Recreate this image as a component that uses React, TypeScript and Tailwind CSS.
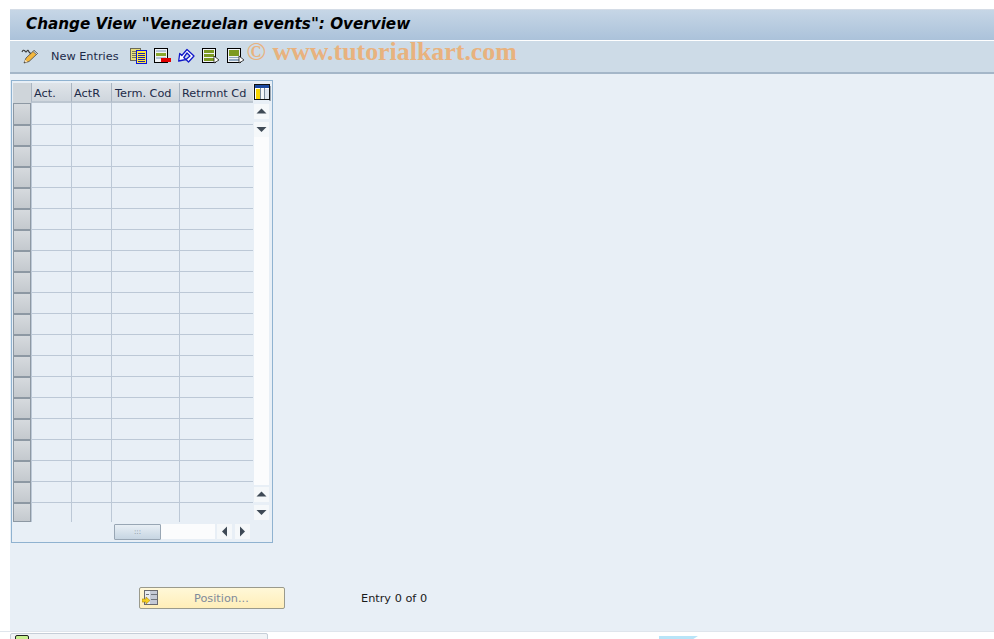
const cols = [
  { label: "Act.", w: "w-[40px]", pad: "pl-[2px]" },
  { label: "ActR", w: "w-[40px]", pad: "pl-[2px]" },
  { label: "Term. Cod", w: "w-[68px]", pad: "pl-[3px]" },
  { label: "Retrmnt Cd", w: "w-[74px]", pad: "pl-[2px]" },
];
const rowHeights = Array.from({ length: 20 }, (_, i) => (i === 0 ? "h-[22px]" : i === 19 ? "h-[19px]" : "h-[21px]"));
const font = { fontFamily: '"DejaVu Sans", sans-serif' };

function Tri({ d }: { d: "up" | "down" | "left" | "right" }) {
  const p = { up: "1.5,8.5 11.5,8.5 6.5,3.5", down: "1.5,4 11.5,4 6.5,9", left: "9,1.5 9,11.5 4,6.5", right: "4,1.5 4,11.5 9,6.5" }[d];
  return (
    <svg width="13" height="13" viewBox="0 0 13 13"><polygon points={p} fill="#3f4a56" /></svg>
  );
}
function ScrollBtn({ d }: { d: "up" | "down" | "left" | "right" }) {
  return <div className="w-[15px] h-[15px] bg-[#f5f8fa] flex items-center justify-center"><Tri d={d} /></div>;
}
function Copy() {
  return (
    <svg width="17" height="16" viewBox="0 0 17 16" shapeRendering="crispEdges">
      <rect x="0.5" y="0.5" width="10" height="12" fill="#e9de7a" stroke="#6a6a5a" />
      <path d="M2 3h7M2 5h7M2 7h7M2 9h7" stroke="#77775a" />
      <rect x="6.5" y="2.5" width="10" height="13" fill="#ffe83c" stroke="#0a14d8" />
      <path d="M8 5h7M8 7h7M8 9h7M8 11h7M8 13h7" stroke="#1a20b0" />
    </svg>
  );
}
function Sheet({ variant }: { variant: "del" | "a" | "b" }) {
  return (
    <svg width="18" height="16" viewBox="0 0 18 16" shapeRendering="crispEdges">
      <rect x="0.5" y="0.5" width="13" height="14" fill="#f0f3f6" stroke="#000" />
      {variant === "del" && (
        <>
          <rect x="2" y="2" width="10" height="2" fill="#b6c4d8" />
          <rect x="2" y="5" width="10" height="3" fill="#8aa82e" />
          <rect x="2" y="9" width="10" height="2" fill="#b6c4d8" />
          <rect x="7" y="10" width="10" height="4" fill="#e00000" />
        </>
      )}
      {variant === "a" && (
        <>
          <rect x="2" y="2" width="10" height="3" fill="#7c9a22" />
          <rect x="2" y="6" width="10" height="3" fill="#7c9a22" />
          <rect x="2" y="10" width="10" height="3" fill="#7c9a22" />
        </>
      )}
      {variant === "b" && (
        <>
          <rect x="2" y="2" width="10" height="6" fill="#7c9a22" />
          <rect x="2" y="9" width="10" height="1" fill="#8fa8c0" />
          <rect x="2" y="11" width="10" height="2" fill="#8fa8c0" />
        </>
      )}
      {variant !== "del" && <polygon points="12,8 12,15 17,12" fill="#fff" stroke="#222" strokeWidth="0.8" shapeRendering="auto" />}
    </svg>
  );
}
function Undo() {
  return (
    <svg width="17" height="16" viewBox="0 0 17 16">
      <path d="M0.7 13 L1.7 5.5 L3.8 7.5 L9 1.5 L16 8 L10.5 14 L8 11.5 L12 8 L9 5 L5.8 9.5 L7.8 11.5 Z" fill="#fff" stroke="#1018c8" strokeWidth="1.3" strokeLinejoin="round" />
    </svg>
  );
}
function Pencil() {
  return (
    <svg width="18" height="17" viewBox="0 0 18 17">
      <path d="M1 4 Q2 1 4 3 Q5 5 6 3 Q7 1 8 4 L10 6" fill="none" stroke="#333" strokeWidth="1.1" />
      <path d="M3 15 L5 10 L13 2.5 L16.5 5.5 L8 13.5 Z" fill="#f4b83e" stroke="#444" strokeWidth="0.8" />
      <path d="M12 3.5 L13 2.5 L16.5 5.5 L15.5 6.5 Z" fill="#d8e4f0" stroke="#444" strokeWidth="0.6" />
      <path d="M3 15 L4 11.5 L6.5 14 Z" fill="#f6e2c0" />
      <path d="M3 15 L3.5 13.5 L4.8 14.5 Z" fill="#222" />
    </svg>
  );
}

export default function App() {
  return (
    <div className="w-[994px] h-[639px] bg-white overflow-hidden flex flex-col pt-[9px]" style={font}>
      <div className="ml-[10px] flex-1 flex flex-col border-t border-[#d4dce6] min-h-0">
        <div className="h-[31px] bg-gradient-to-b from-[#c6d6e6] to-[#abc2da] flex items-center pl-[16px] border-b border-white">
          <span className="text-[15.2px] font-bold italic text-black leading-none whitespace-nowrap">Change View "Venezuelan events": Overview</span>
        </div>
        <div className="h-[33px] bg-[#cddbe7] border-b-2 border-[#a4b6c8] flex items-center pl-[11px]">
          <Pencil />
          <span className="ml-[12px] pt-[2px] text-[11.3px] text-[#1c2a48] whitespace-nowrap">New Entries</span>
          <div className="ml-[11px] mb-[2px] flex items-center">
            <Copy />
            <div className="ml-[7px] flex"><Sheet variant="del" /></div>
            <div className="ml-[6px] flex"><Undo /></div>
            <div className="ml-[7px] flex"><Sheet variant="a" /></div>
            <div className="ml-[7px] flex"><Sheet variant="b" /></div>
          </div>
          <span className="ml-[2px] mt-[-10px] text-[25.9px] font-bold text-[#e8b27e] whitespace-nowrap leading-none" style={{ fontFamily: '"Liberation Serif", serif' }}>© www.tutorialkart.com</span>
        </div>
        <div className="flex-1 bg-[#e8eff6] flex flex-col pt-[6px] pl-px min-h-0">
          <div className="w-[262px] h-[463px] border border-[#8fb2d0] pt-[2px] pl-px">
            <div className="flex h-[20px]">
              <div className="w-[18px] bg-[#cfd5da]" />
              {cols.map((c) => (
                <div key={c.label} className={`${c.w} ${c.pad} border-l border-[#a9b5c2] border-b-2 border-b-[#bcc6d0] bg-gradient-to-b from-[#dfe4e9] to-[#cfd6dd] text-[11.3px] leading-[22px] text-[#1c2a48] whitespace-nowrap overflow-hidden`}>{c.label}</div>
              ))}
              <div className="w-[18px] pl-px pt-px">
                <svg width="17" height="17" viewBox="0 0 17 17" shapeRendering="crispEdges">
                  <rect x="15" y="2" width="2" height="15" fill="#9aa6b2" />
                  <rect x="0.5" y="0.5" width="15" height="15" fill="#fff" stroke="#111" />
                  <rect x="1" y="1" width="14" height="3" fill="#1c4aa0" />
                  <rect x="2" y="5" width="4" height="10" fill="#f6d400" />
                  <rect x="7" y="5" width="3" height="10" fill="#f4f6f8" />
                  <rect x="11" y="5" width="4" height="10" fill="#dfe6ee" />
                  <path d="M6.5 4v11M10.5 4v11" stroke="#7a8a9a" />
                </svg>
              </div>
            </div>
            <div className="flex h-[419px]">
              <div className="flex flex-col w-[18px]">
                {rowHeights.map((h, r) => (
                  <div key={r} className={`${h} bg-gradient-to-b from-[#d6dade] to-[#c4c9ce] border border-[#8d98a3]`} />
                ))}
              </div>
              <div className="w-[222px] flex flex-col">
                {rowHeights.map((h, r) => (
                  <div key={r} className={`flex ${h} ${r < 19 ? "border-b border-[#bcc8d6]" : ""}`}>
                    {cols.map((c) => (
                      <div key={c.label} className={`${c.w} border-l border-[#bcc8d6]`} />
                    ))}
                  </div>
                ))}
              </div>
              <div className="w-[18px] pl-px pt-[1px] pb-[2px] flex flex-col">
                <div className="w-[15px] flex-1 flex flex-col">
                  <ScrollBtn d="up" />
                  <div className="h-[3px]" />
                  <ScrollBtn d="down" />
                  <div className="flex-1 bg-[#fbfcfd]" />
                  <div className="h-[2px]" />
                  <ScrollBtn d="up" />
                  <div className="h-[3px]" />
                  <ScrollBtn d="down" />
                </div>
              </div>
            </div>
            <div className="flex items-start h-[20px] pl-[101px] pt-[2px]">
              <div className="w-[47px] h-[16px] rounded-[1px] bg-gradient-to-b from-[#e8eff5] to-[#c6d5e2] border border-[#98a6b4] flex items-center justify-center text-[7px] text-[#6f7b87] leading-none">:::</div>
              <div className="w-[54px] h-[15px] bg-[#fbfcfd]" />
              <div className="ml-[2px]"><ScrollBtn d="left" /></div>
              <div className="ml-[3px]"><ScrollBtn d="right" /></div>
            </div>
          </div>
          <div className="flex items-center mt-[44px]">
            <div className="ml-[128px] w-[146px] h-[22px] rounded-[2px] border border-[#9a9a8c] bg-gradient-to-b from-[#fff8d8] to-[#ffeeb8] flex items-center relative">
              <svg width="16" height="16" viewBox="0 0 16 16" className="ml-[2px]" shapeRendering="crispEdges">
                <rect x="2.5" y="0.5" width="13" height="14" fill="#c4c9d6" stroke="#6a6a70" />
                <rect x="3" y="1" width="5" height="13" fill="#e8ecf2" />
                <path d="M4 4h3M9 4h6M9 9h6" stroke="#70747c" />
                <polygon points="0,9 4,9 4,7 8,10.5 4,14 4,12 0,12" fill="#f6d020" stroke="#a88410" strokeWidth="0.6" shapeRendering="auto" />
              </svg>
              <span className="absolute left-[54px] top-[3px] text-[11.3px] text-[#7f8a9a] whitespace-nowrap">Position...</span>
            </div>
            <span className="ml-[76px] pt-[3px] text-[11.3px] text-[#1a1a1a] whitespace-nowrap">Entry 0 of 0</span>
          </div>
        </div>
      </div>
      <div className="h-[8px] relative shrink-0 border-t border-[#dfe5ec]">
        <div className="absolute left-[10px] top-[1px] w-[258px] h-[10px] bg-[#f0f3f6] border border-[#c6ced8] rounded-t-[2px]">
          <div className="absolute left-[4px] top-[1px] w-[14px] h-[10px] bg-[#c8f090] border border-[#222] rounded-[2px]" />
        </div>
        <div className="absolute left-[659px] top-[4px] w-[39px] h-[5px] bg-[#b8e4f8]" style={{ clipPath: "polygon(0 0,100% 0,80% 100%,0 100%)" }} />
      </div>
    </div>
  );
}
